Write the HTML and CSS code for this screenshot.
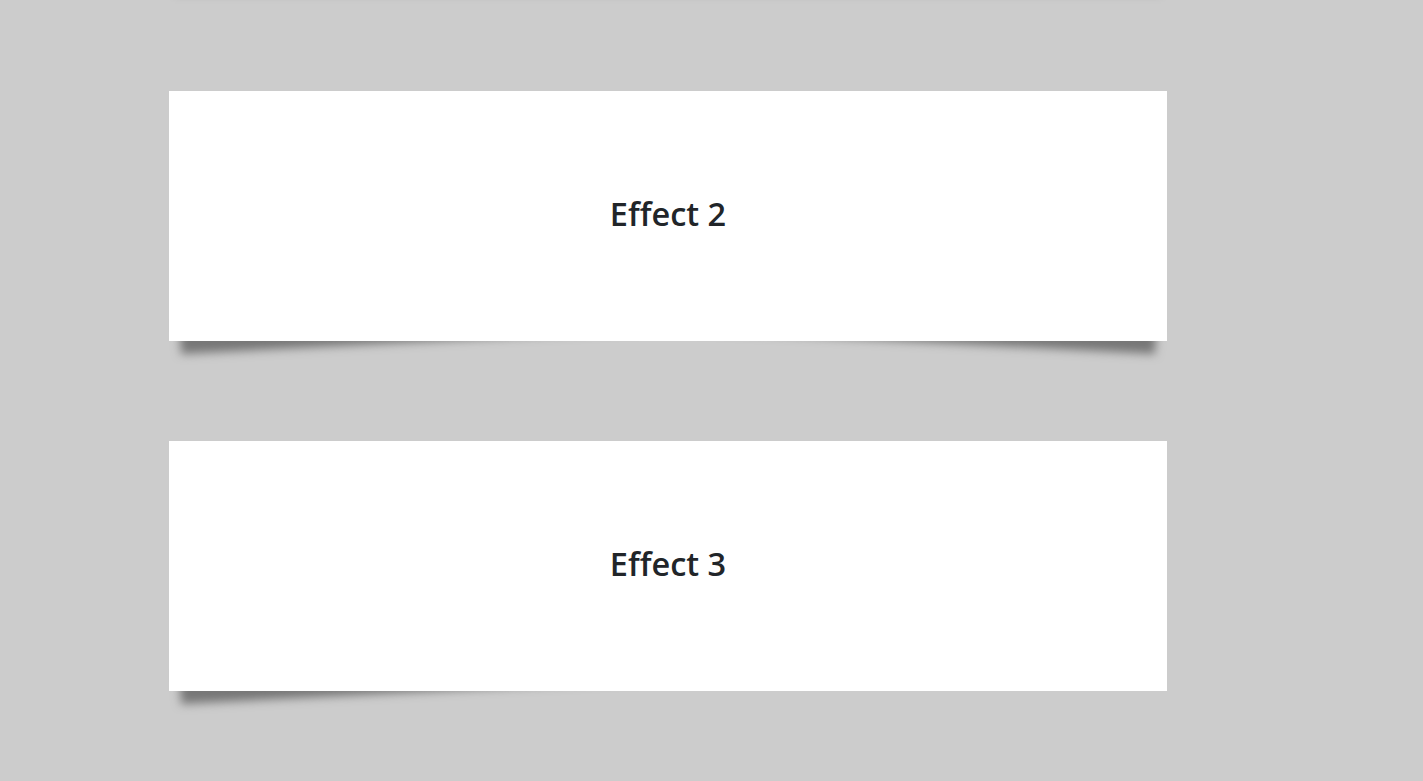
FILE: index.html
```html
<!DOCTYPE html>
<html>
<head>
<meta charset="utf-8">
<link rel="stylesheet" href="styles.css">
</head>
<body>
<div class="stack">
  <div class="box effect1"></div>
  <div class="box effect2"><h3 class="label">Effect 2</h3></div>
  <div class="box effect3"><h3 class="label">Effect 3</h3></div>
</div>
</body>
</html>
```
FILE: styles.css
```css
html, body {
  margin: 0;
  padding: 0;
}
body {
  background: #cccccc;
  font-family: "Open Sans", "Noto Sans", sans-serif;
  color: #212529;
  overflow: hidden;
}
.stack {
  display: flex;
  flex-direction: column;
  gap: 100px;
  margin-top: -259px;
  padding-left: 169px;
  padding-bottom: 100px;
}
.box {
  position: relative;
  width: 998px;
  height: 250px;
  background: #ffffff;
  display: flex;
  align-items: center;
  justify-content: center;
}
.label {
  margin: 0 0 5px 0;
  font-size: 32.5px;
  font-weight: 600;
  line-height: 1.2;
}
.effect1 {
  box-shadow: 0 10px 6px -6px #777;
}
.effect2::before,
.effect2::after,
.effect3::before {
  z-index: -1;
  position: absolute;
  content: "";
  bottom: 15px;
  left: 10px;
  width: 50%;
  top: 80%;
  background: #777;
  box-shadow: 0 15px 10px #777;
  transform: rotate(-3deg);
}
.effect2::after {
  transform: rotate(3deg);
  right: 10px;
  left: auto;
}
```
